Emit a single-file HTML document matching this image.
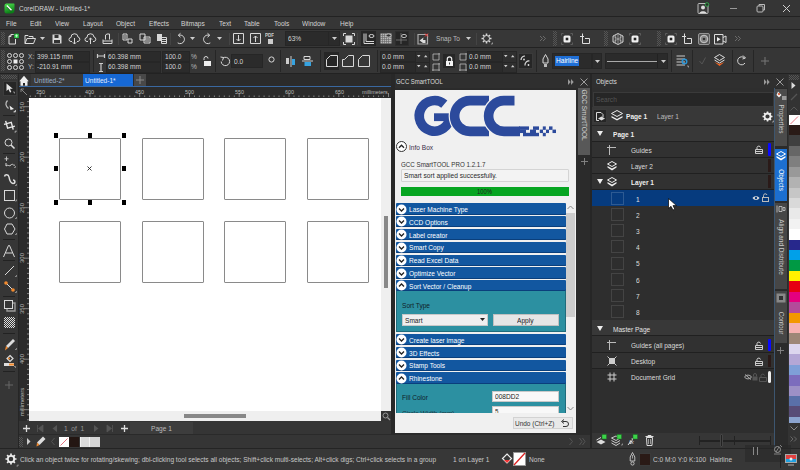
<!DOCTYPE html>
<html><head><meta charset="utf-8">
<style>
*{margin:0;padding:0;box-sizing:border-box}
html,body{width:800px;height:470px;overflow:hidden;background:#333;font-family:"Liberation Sans",sans-serif}
.a{position:absolute}
.t{position:absolute;font-size:7.3px;line-height:8px;color:#d4d4d4;white-space:nowrap;transform:scaleX(0.9);transform-origin:0 50%}
.ln{position:absolute;background:#222}
svg{position:absolute;overflow:visible}
.ic{fill:none;stroke:#d8d8d8;stroke-width:1}
.box{position:absolute;background:#2a2a2a;border:1px solid #454545}
</style></head><body>

<!-- TITLE BAR -->
<div class="a" style="left:0;top:0;width:800px;height:16px;background:#353535"></div>
<svg style="left:3.5px;top:3px" width="11" height="11"><defs><linearGradient id="cg" x1="0" y1="0" x2="0.3" y2="1"><stop offset="0" stop-color="#4fe24f"/><stop offset="1" stop-color="#0b7d17"/></linearGradient></defs><path d="M2.5 0.5H10L10.5 1V7A3.5 3.5 0 0 1 7 10.5H2.5A2 2 0 0 1 0.5 8.5V2.5A2 2 0 0 1 2.5 0.5Z" fill="url(#cg)"/><path d="M3 3.5L7.5 8" stroke="#111" stroke-width="1.6" opacity="0.6"/><path d="M2.8 2.6L7.5 7.2" stroke="#fff" stroke-width="1.4"/></svg>
<div class="t" style="left:19px;top:5px;font-size:7.2px">CorelDRAW - Untitled-1*</div>
<svg style="left:697px;top:2px" width="13" height="12"><rect x="1" y="1.5" width="10" height="10" rx="1" fill="#3a3a3a" stroke="#bbb" stroke-width="1"/><circle cx="6" cy="5.5" r="2" fill="#ddd"/><path d="M2.5 11C3 8.5 9 8.5 9.5 11Z" fill="#ddd"/><circle cx="10" cy="2.5" r="1.8" fill="#2f2f2f" stroke="#2fae4a" stroke-width="0.9"/></svg>
<div class="a" style="left:730px;top:8px;width:7px;height:1px;background:#999"></div>
<svg style="left:756px;top:3px" width="10" height="10"><rect x="1" y="3" width="6" height="6" rx="1" fill="none" stroke="#bbb"/><path d="M3 3V1.5H8.5V7H7" fill="none" stroke="#bbb"/></svg>
<svg style="left:782px;top:4px" width="9" height="9"><path d="M1 1L8 8M8 1L1 8" stroke="#ccc" stroke-width="1"/></svg>
<div class="ln" style="left:0;top:16px;width:800px;height:1px"></div>

<!-- MENU BAR -->
<div class="a" style="left:0;top:17px;width:800px;height:12px;background:#363636"></div>
<div class="t" style="left:6px;top:19.5px">File</div>
<div class="t" style="left:30px;top:19.5px">Edit</div>
<div class="t" style="left:55px;top:19.5px">View</div>
<div class="t" style="left:83px;top:19.5px">Layout</div>
<div class="t" style="left:116px;top:19.5px">Object</div>
<div class="t" style="left:149px;top:19.5px">Effects</div>
<div class="t" style="left:181px;top:19.5px">Bitmaps</div>
<div class="t" style="left:219px;top:19.5px">Text</div>
<div class="t" style="left:244px;top:19.5px">Table</div>
<div class="t" style="left:274px;top:19.5px">Tools</div>
<div class="t" style="left:302px;top:19.5px">Window</div>
<div class="t" style="left:340px;top:19.5px">Help</div>
<div class="ln" style="left:0;top:29px;width:800px;height:1px"></div>

<!-- TOOLBAR -->
<div class="a" style="left:0;top:30px;width:800px;height:17px;background:#373737"></div>
<div class="ln" style="left:0;top:47px;width:800px;height:1px"></div>

<!-- toolbar icons -->
<svg style="left:1px;top:32px" width="4" height="13"><pattern id="grip" width="2" height="2" patternUnits="userSpaceOnUse"><rect width="1" height="1" fill="#555"/><rect x="1" y="1" width="1" height="1" fill="#555"/></pattern><rect width="4" height="13" fill="url(#grip)"/></svg>
<svg style="left:7px;top:33px" width="13" height="12"><path d="M4 1.5H7 M2 3.5L4 1.5V3.5H2V11H8.5V6" fill="none" stroke="#ddd" stroke-width="1"/><rect x="7" y="0.3" width="5" height="5" fill="#2fd14a" stroke="#222" stroke-width="0.5"/><path d="M9.5 1.3V4.3M8 2.8H11" stroke="#fff" stroke-width="0.6"/></svg>
<svg style="left:24px;top:33px" width="12" height="12"><path d="M1 2.5H4L5 3.5H9V5.5 M1 2.5V10.5H9.5L11.5 5.5H3L1 10.5" fill="none" stroke="#ddd" stroke-width="1"/></svg>
<svg style="left:40px;top:37px" width="5" height="3"><path d="M0 0H5L2.5 3Z" fill="#ccc"/></svg>
<svg style="left:52px;top:34px" width="10" height="10"><path d="M0.5 0.5H8L9.5 2V9.5H0.5Z" fill="#d8d8d8"/><rect x="2.5" y="1" width="4" height="3" fill="#333"/><rect x="2" y="6" width="6" height="3" fill="#333"/></svg>
<svg style="left:69px;top:33px" width="11" height="12"><path class="ic" d="M3 8.5 H2 A2 2 0 0 1 2 4.5 A3.5 3.5 0 0 1 9 4 A2.3 2.3 0 0 1 9 8.5 H8 M5.5 5V11 M3.8 9.3L5.5 11L7.2 9.3"/></svg>
<svg style="left:85px;top:33px" width="11" height="12"><path class="ic" d="M3 8.5 H2 A2 2 0 0 1 2 4.5 A3.5 3.5 0 0 1 9 4 A2.3 2.3 0 0 1 9 8.5 H8 M5.5 11V5 M3.8 6.7L5.5 5L7.2 6.7"/></svg>
<svg style="left:102px;top:33px" width="11" height="11"><path class="ic" d="M1 6.5V10.5H10V6.5 M3.5 6.5 V2 L5 1 H7.5 V6.5 M1 8H10"/></svg>
<div class="a" style="left:118px;top:33px;width:1px;height:12px;background:#444"></div>
<svg style="left:122px;top:33px" width="11" height="11"><path class="ic" d="M1 1H5V7H1Z M2 3H4 M2 5H4 M6 6H10V10H6Z"/></svg>
<svg style="left:139px;top:33px" width="12" height="11"><path class="ic" d="M1 1H6V7H1Z M5 4H11V10H5Z M6 6H10 M6 8H10"/></svg>
<svg style="left:156px;top:33px" width="11" height="11"><path d="M1 1H6V8H1Z" fill="#d8d8d8"/><path class="ic" d="M5.5 4.5H10.5V10.5H5.5Z M6 6.5H10 M6 8.5H10"/></svg>
<div class="a" style="left:170px;top:33px;width:1px;height:12px;background:#444"></div>
<svg style="left:175px;top:33px" width="11" height="12"><path class="ic" d="M4 2.2 A4.3 4.3 0 1 1 2.2 9.5" stroke-width="1.1" stroke-dasharray="17 1 1 1 1 1"/><path d="M5.5 0.3L3.2 2.2L5.5 4.2" class="ic" stroke-width="1.1"/></svg>
<svg style="left:190px;top:37px" width="5" height="3"><path d="M0 0H5L2.5 3Z" fill="#ccc"/></svg>
<svg style="left:202px;top:33px" width="11" height="12"><path class="ic" d="M7 2.2 A4.3 4.3 0 1 0 8.8 9.5" stroke-width="1.1" stroke-dasharray="17 1 1 1 1 1"/><path d="M5.5 0.3L7.8 2.2L5.5 4.2" class="ic" stroke-width="1.1"/></svg>
<svg style="left:217px;top:37px" width="5" height="3"><path d="M0 0H5L2.5 3Z" fill="#ccc"/></svg>
<div class="a" style="left:229px;top:33px;width:1px;height:12px;background:#444"></div>
<svg style="left:233px;top:33px" width="11" height="11"><path class="ic" d="M0.5 0.5H10.5V10.5H0.5Z M5.5 2V8 M3.5 6L5.5 8L7.5 6"/></svg>
<svg style="left:250px;top:33px" width="11" height="11"><path class="ic" d="M0.5 0.5H10.5V10.5H0.5Z M5.5 9V3 M3.5 5L5.5 3L7.5 5"/></svg>
<div class="t" style="left:265px;top:33px;font-size:5px;line-height:5px;font-weight:bold;color:#ccc">PDF</div>
<svg style="left:268px;top:39px" width="5" height="5"><rect x="0" y="0" width="5" height="5" fill="#ccc"/></svg>
<div class="box" style="left:285px;top:31px;width:55px;height:15px;background:#2b2b2b;border-color:#262626"></div>
<div class="t" style="left:288px;top:35px">63%</div>
<div class="a" style="left:328px;top:32px;width:1px;height:13px;background:#262626"></div>
<svg style="left:332px;top:37px" width="5" height="3"><path d="M0 0H5L2.5 3Z" fill="#ccc"/></svg>
<svg style="left:343px;top:33px" width="12" height="12"><rect x="2.5" y="2.5" width="7" height="7" fill="#d8d8d8"/><path class="ic" d="M0.5 3V0.5H3 M9 0.5H11.5V3 M11.5 9V11.5H9 M3 11.5H0.5V9"/></svg>
<div class="a" style="left:357px;top:33px;width:1px;height:12px;background:#444"></div>
<div class="a" style="left:361px;top:31px;width:15px;height:15px;background:#262626"></div>
<svg style="left:363px;top:33px" width="12" height="11"><path class="ic" d="M1 0.5V10.5H11 M3 0.5V8.5H11"/><ellipse cx="8.5" cy="3" rx="2.5" ry="1.5" class="ic"/></svg>
<svg style="left:380px;top:33px" width="12" height="11"><rect x="0.5" y="0.5" width="11" height="10" fill="#b8b8b8"/><path d="M2.5 0V11M4.5 0V11M6.5 0V11M8.5 0V11M0 2.5H12M0 4.5H12M0 6.5H12M0 8.5H12" stroke="#666" stroke-width="0.6"/><ellipse cx="8.5" cy="2.5" rx="2.5" ry="1.6" fill="#333" stroke="#ccc" stroke-width="0.8"/></svg>
<div class="a" style="left:395px;top:31px;width:14px;height:15px;background:#262626;border:1px solid #2e2e2e"></div>
<svg style="left:396px;top:33px" width="12" height="12"><path d="M5 0V11M0 7H11" stroke="#888" stroke-width="0.7"/><ellipse cx="8" cy="3" rx="2.5" ry="1.6" fill="#262626" stroke="#ccc" stroke-width="0.9"/></svg>
<div class="a" style="left:414px;top:33px;width:1px;height:12px;background:#444"></div>
<svg style="left:417px;top:33px" width="12" height="12"><path d="M1 1.5H10.5V11H1Z" fill="none" stroke="#aaa" stroke-width="1.2"/><path d="M2.5 7.5L6.5 4.5L6 7H8.5V10H6Z" fill="#ddd"/><path d="M8 0.5L11 3.5M11 0.5L8 3.5" stroke="#e33" stroke-width="1"/></svg>
<div class="t" style="left:436px;top:35px;color:#bbb">Snap To</div>
<svg style="left:466px;top:37px" width="5" height="3"><path d="M0 0H5L2.5 3Z" fill="#ccc"/></svg>
<div class="a" style="left:476px;top:33px;width:1px;height:12px;background:#444"></div>
<svg style="left:481px;top:33px" width="12" height="12"><circle cx="5.5" cy="5.5" r="3" class="ic" stroke-width="1.8"/><path d="M5.5 0.5V2.5M5.5 8.5V10.5M0.5 5.5H2.5M8.5 5.5H10.5M2 2L3.3 3.3M7.7 7.7L9 9M9 2L7.7 3.3M3.3 7.7L2 9" stroke="#d8d8d8" stroke-width="1.6"/><path d="M10 11H11.5V9.5" stroke="#aaa" stroke-width="0.8" fill="none"/></svg>
<svg style="left:540px;top:36px" width="6" height="5"><path d="M0 0L2.5 2.5L0 5M3 0L5.5 2.5L3 5" stroke="#777" fill="none" stroke-width="0.8"/></svg>
<svg style="left:553px;top:31px" width="4" height="15"><rect width="4" height="15" fill="url(#grip)"/></svg>
<svg style="left:561px;top:33px" width="12" height="12"><rect x="2.5" y="2.5" width="7" height="7" rx="1.5" fill="#f0f0f0"/><rect x="4.7" y="4.7" width="2.6" height="2.6" fill="#222"/><path d="M0.5 2.5V0.5H2.5 M9.5 0.5H11.5V2.5 M11.5 9.5V11.5H9.5 M2.5 11.5H0.5V9.5" stroke="#666" stroke-width="0.8" fill="none"/></svg>
<svg style="left:579px;top:33px" width="12" height="12"><path d="M3.5 0.5V4M1 3.5H5 M3.5 4V10.5H10.5V5.5H6" fill="none" stroke="#ddd" stroke-width="1"/></svg>
<svg style="left:604px;top:31px" width="4" height="15"><rect width="4" height="15" fill="url(#grip)"/></svg>
<svg style="left:612px;top:33px" width="12" height="12"><path d="M6 0.5L11 3V9L6 11.5L1 9V3Z" fill="#444" stroke="#ddd" stroke-width="0.9"/><path d="M6 0.5V11.5M1 3L11 9M11 3L1 9M3.5 1.8V10.2M8.5 1.8V10.2" stroke="#bbb" stroke-width="0.6"/></svg>
<svg style="left:629px;top:33px" width="12" height="12"><rect x="2.5" y="2.5" width="7" height="7" rx="1.5" fill="#f0f0f0"/><rect x="4.7" y="4.7" width="2.6" height="2.6" fill="#222"/><path d="M0.5 2.5V0.5H2.5 M9.5 0.5H11.5V2.5 M11.5 9.5V11.5H9.5 M2.5 11.5H0.5V9.5" stroke="#666" stroke-width="0.8" fill="none"/></svg>
<svg style="left:657px;top:31px" width="4" height="15"><rect width="4" height="15" fill="url(#grip)"/></svg>
<svg style="left:665px;top:33px" width="12" height="12"><rect x="2.5" y="2.5" width="7" height="7" rx="1.5" fill="#f0f0f0"/><rect x="4.7" y="4.7" width="2.6" height="2.6" fill="#222"/><path d="M0.5 2.5V0.5H2.5 M9.5 0.5H11.5V2.5 M11.5 9.5V11.5H9.5 M2.5 11.5H0.5V9.5" stroke="#666" stroke-width="0.8" fill="none"/></svg>
<svg style="left:681px;top:33px" width="12" height="12"><path d="M3.5 0.5V4M1 3.5H5 M3.5 4V10.5H10.5V5.5H6" fill="none" stroke="#ddd" stroke-width="1"/></svg>
<svg style="left:698px;top:33px" width="12" height="12"><rect x="0.5" y="0.5" width="11" height="11" fill="#555" stroke="#aaa" stroke-width="0.8" rx="1.5"/><circle cx="6" cy="6" r="3.8" fill="#888" stroke="#ddd" stroke-width="0.8"/><circle cx="6" cy="6" r="1.3" fill="#333"/></svg>
<svg style="left:714px;top:34px" width="13" height="11"><path d="M0.5 0.5H9V10H0.5Z M9 3.5L12 2V8.5L9 7" fill="none" stroke="#ddd" stroke-width="1"/><path d="M3 3L6.5 5.3L3 7.6Z" fill="#eee"/></svg>
<svg style="left:735px;top:36px" width="6" height="5"><path d="M0 0L2.5 2.5L0 5M3 0L5.5 2.5L3 5" stroke="#777" fill="none" stroke-width="0.8"/></svg>


<!-- PROPERTY BAR -->
<div class="a" style="left:0;top:48px;width:800px;height:25px;background:#363636"></div>
<svg style="left:1px;top:50px" width="4" height="21"><rect width="4" height="21" fill="url(#grip)"/></svg>
<svg style="left:7px;top:53px" width="17" height="17"><g class="ic" stroke="#ccc"><circle cx="2.5" cy="2.5" r="2"/><circle cx="8.5" cy="2.5" r="2"/><circle cx="14.5" cy="2.5" r="2"/><circle cx="2.5" cy="8.5" r="2"/><circle cx="14.5" cy="8.5" r="2"/><circle cx="2.5" cy="14.5" r="2"/><circle cx="8.5" cy="14.5" r="2"/><circle cx="14.5" cy="14.5" r="2"/></g><rect x="6.5" y="6.5" width="4" height="4" fill="#eee"/></svg>
<div class="t" style="left:28px;top:53px;color:#bbb">X:</div>
<div class="t" style="left:28px;top:63px;color:#bbb">Y:</div>
<div class="box" style="left:35px;top:51px;width:55px;height:11px;border-color:#262626;background:#2b2b2b"></div>
<div class="box" style="left:35px;top:62px;width:55px;height:11px;border-color:#262626;background:#2b2b2b"></div>
<div class="t" style="left:37px;top:53px">399.115 mm</div>
<div class="t" style="left:37px;top:63px">-210.91 mm</div>
<div class="a" style="left:93px;top:50px;width:1px;height:22px;background:#262626"></div>
<svg style="left:97px;top:54px" width="8" height="4"><path d="M0.5 0V4M7.5 0V4M0.5 2H7.5" stroke="#ccc" stroke-width="1.2"/></svg>
<svg style="left:99px;top:63px" width="4" height="9"><path d="M0 0.5H4M0 8.5H4M2 0.5V8.5" stroke="#ccc" stroke-width="1.2"/></svg>
<div class="box" style="left:106px;top:51px;width:55px;height:11px;border-color:#262626;background:#2b2b2b"></div>
<div class="box" style="left:106px;top:62px;width:55px;height:11px;border-color:#262626;background:#2b2b2b"></div>
<div class="t" style="left:108px;top:53px">60.398 mm</div>
<div class="t" style="left:108px;top:63px">60.398 mm</div>
<div class="box" style="left:162px;top:51px;width:28px;height:11px;border-color:#262626;background:#2b2b2b"></div>
<div class="box" style="left:162px;top:62px;width:28px;height:11px;border-color:#262626;background:#2b2b2b"></div>
<div class="t" style="left:165px;top:53px">100.0</div>
<div class="t" style="left:165px;top:63px">100.0</div>
<div class="t" style="left:191px;top:53px;color:#bbb">%</div>
<div class="t" style="left:191px;top:63px;color:#bbb">%</div>
<svg style="left:202px;top:56px" width="9" height="10"><path d="M2 4V2.5A2 2 0 0 1 6 2.5" class="ic" stroke-width="1.2"/><rect x="2" y="5" width="7" height="5" fill="#eee"/></svg>
<div class="a" style="left:215px;top:50px;width:1px;height:22px;background:#262626"></div>
<svg style="left:220px;top:56px" width="11" height="11"><path d="M3 2A4.2 4.2 0 1 1 1.2 5.5" class="ic" stroke-width="1.2"/><path d="M0.5 1L3.5 1.5L2.5 4.5" class="ic"/></svg>
<div class="box" style="left:231px;top:54px;width:32px;height:14px;border-color:#262626;background:#2b2b2b"></div>
<div class="t" style="left:234px;top:58px">0.0</div>
<svg style="left:268px;top:56px" width="7" height="7"><circle cx="3.5" cy="3.5" r="2.6" class="ic" stroke-width="1.1"/></svg>
<div class="a" style="left:280px;top:50px;width:1px;height:22px;background:#262626"></div>
<svg style="left:285px;top:55px" width="11" height="13"><path d="M1 3V9H4V3Z" fill="#ccc"/><path d="M6 1V12" stroke="#ccc"/><path d="M7 4H10V10H7Z" fill="#36a3e0"/></svg>
<svg style="left:302px;top:55px" width="11" height="13"><path d="M2 1.5H8V4.5H2Z" class="ic"/><path d="M0 6H11" stroke="#ccc"/><path d="M2.5 7H9V11H2.5Z" fill="#36a3e0"/></svg>
<div class="a" style="left:320px;top:50px;width:1px;height:22px;background:#262626"></div>
<div class="a" style="left:324px;top:52px;width:15px;height:18px;background:#262626"></div>
<svg style="left:326px;top:55px" width="12" height="12"><path class="ic" d="M0.5 11.5V4.5L4.5 0.5H11.5V11.5Z" stroke-width="1.1"/></svg>
<svg style="left:342px;top:55px" width="12" height="12"><path class="ic" d="M0.5 11.5V4.5H2.5L6.5 0.5H11.5V11.5Z" stroke-width="1.1"/></svg>
<svg style="left:358px;top:55px" width="12" height="12"><path class="ic" d="M0.5 11.5V4.5L4.5 0.5H11.5V11.5Z" stroke-width="1.1"/></svg>
<div class="a" style="left:377px;top:50px;width:1px;height:22px;background:#262626"></div>
<div class="box" style="left:380px;top:51px;width:36px;height:11px;border-color:#262626;background:#2b2b2b"></div>
<div class="box" style="left:380px;top:62px;width:36px;height:11px;border-color:#262626;background:#2b2b2b"></div>
<div class="t" style="left:382px;top:53px">0.0 mm</div>
<div class="t" style="left:382px;top:63px">0.0 mm</div>
<div class="a" style="left:415px;top:51px;width:15px;height:22px;background:#2f2f2f;border:1px solid #262626"></div><div class="a" style="left:415px;top:61.5px;width:15px;height:1px;background:#262626"></div>
<svg style="left:417px;top:55px" width="11" height="14"><path d="M0 0H3.5L1.75 2.2Z M7 2.2H10.5L8.75 0Z M0 10H3.5L1.75 12.2Z M7 12.2H10.5L8.75 10Z" fill="#ccc"/></svg>
<svg style="left:431px;top:52px" width="10" height="21"><path d="M2 2H8V8H2Z M2 12H8V18H2Z" fill="none" stroke="#bbb" stroke-width="0.8"/><g fill="#888"><rect x="7" y="1" width="2" height="2"/><rect x="1" y="17" width="2" height="2"/><rect x="7" y="11" width="2" height="2"/><rect x="7" y="17" width="2" height="2"/></g></svg>
<div class="a" style="left:443px;top:54px;width:12px;height:14px;background:#262626"></div>
<svg style="left:445px;top:56px" width="9" height="11"><path d="M2.3 5V3A2.2 2.2 0 0 1 6.7 3V5" fill="none" stroke="#eee" stroke-width="1.2"/><rect x="1" y="5" width="7" height="5" fill="#f4f4f4"/><rect x="4" y="6.5" width="1" height="2" fill="#333"/></svg>
<svg style="left:458px;top:52px" width="10" height="21"><path d="M2 2H8V8H2Z M2 12H8V18H2Z" fill="none" stroke="#bbb" stroke-width="0.8"/><g fill="#888"><rect x="7" y="1" width="2" height="2"/><rect x="1" y="17" width="2" height="2"/><rect x="7" y="17" width="2" height="2"/></g></svg>
<div class="box" style="left:467px;top:51px;width:36px;height:11px;border-color:#262626;background:#2b2b2b"></div>
<div class="box" style="left:467px;top:62px;width:36px;height:11px;border-color:#262626;background:#2b2b2b"></div>
<div class="t" style="left:469px;top:53px">0.0 mm</div>
<div class="t" style="left:469px;top:63px">0.0 mm</div>
<div class="a" style="left:502px;top:51px;width:15px;height:22px;background:#2f2f2f;border:1px solid #262626"></div><div class="a" style="left:502px;top:61.5px;width:15px;height:1px;background:#262626"></div>
<svg style="left:504px;top:55px" width="11" height="14"><path d="M0 0H3.5L1.75 2.2Z M7 2.2H10.5L8.75 0Z M0 10H3.5L1.75 12.2Z M7 12.2H10.5L8.75 10Z" fill="#ccc"/></svg>
<div class="a" style="left:518px;top:53px;width:15px;height:16px;background:#262626;border:1px solid #3a3a3a"></div>
<svg style="left:520px;top:55px" width="11" height="12"><path d="M1 5A4 4 0 0 1 5 1M5 10.5A4 4 0 0 1 9.5 6" fill="none" stroke="#ddd" stroke-width="1.2"/><circle cx="4" cy="4.5" r="0.9" fill="#ddd"/><circle cx="8.5" cy="10" r="0.9" fill="#ddd"/></svg>
<div class="a" style="left:536px;top:50px;width:1px;height:22px;background:#262626"></div>
<svg style="left:542px;top:54px" width="7" height="14"><path d="M3.5 0.5L6 5V9H1V5Z" class="ic" stroke="#bbb"/><path d="M2 10H5V13H2Z" fill="#bbb"/></svg>
<div class="box" style="left:552px;top:53px;width:40px;height:16px;border-color:#262626;background:#2b2b2b"></div>
<div class="a" style="left:555px;top:56px;width:24px;height:10px;background:#1f6fd6"></div>
<div class="t" style="left:556px;top:57px;color:#fff">Hairline</div>
<div class="box" style="left:592px;top:53px;width:10px;height:16px;border-color:#262626;background:#2b2b2b"></div>
<svg style="left:595px;top:60px" width="5" height="3"><path d="M0 0H5L2.5 3Z" fill="#ccc"/></svg>
<div class="box" style="left:605px;top:53px;width:63px;height:16px;border-color:#262626;background:#2b2b2b"></div>
<div class="a" style="left:607px;top:61px;width:50px;height:1px;background:#aaa"></div>
<div class="a" style="left:657px;top:54px;width:1px;height:14px;background:#222"></div>
<svg style="left:661px;top:60px" width="5" height="3"><path d="M0 0H5L2.5 3Z" fill="#ccc"/></svg>
<div class="a" style="left:671px;top:50px;width:1px;height:22px;background:#262626"></div>
<svg style="left:676px;top:55px" width="13" height="13"><path d="M0.5 1H9M0.5 4H9M0.5 7H9M0.5 10H9" stroke="#999" stroke-width="1.6"/><circle cx="8.5" cy="6.5" r="2.3" fill="none" stroke="#2b95d6" stroke-width="1.4"/><path d="M11 11H12.5V12.5" stroke="#aaa" fill="none" stroke-width="0.8"/></svg>
<div class="a" style="left:692px;top:50px;width:1px;height:22px;background:#262626"></div>
<svg style="left:699px;top:57px" width="7" height="8"><path d="M0.5 4L3 7L6.5 0.5" stroke="#555" fill="none"/></svg>
<svg style="left:714px;top:54px" width="11" height="13"><path d="M5.5 0.5L10.5 3.5L5.5 6.5L0.5 3.5Z" fill="none" stroke="#ddd"/><path d="M0.5 6L5.5 9L10.5 6" stroke="#ddd" fill="none"/><path d="M0.5 8L5.5 12L10.5 8L5.5 10Z" fill="#f26522"/></svg>
<div class="a" style="left:732px;top:50px;width:1px;height:22px;background:#262626"></div>
<svg style="left:736px;top:55px" width="11" height="12"><path d="M8.5 3A4 4 0 1 0 9 8" class="ic" stroke-width="1.5"/><path d="M7 0.5L9.5 3L6.5 4" class="ic"/></svg>
<div class="a" style="left:753px;top:50px;width:1px;height:22px;background:#262626"></div>
<svg style="left:761px;top:57px" width="8" height="8"><path d="M4 0V8M0 4H8" stroke="#777" stroke-width="1"/></svg>
<div class="ln" style="left:0;top:73px;width:800px;height:1px"></div>


<!-- LEFT TOOLBOX -->
<div class="a" style="left:0;top:74px;width:18px;height:374px;background:#363636"></div>
<div class="a" style="left:18px;top:74px;width:1px;height:374px;background:#262626"></div>
<svg style="left:1px;top:75px" width="16" height="4"><rect width="16" height="4" fill="url(#grip)"/></svg>
<div class="a" style="left:3px;top:81px;width:14px;height:15px;background:#262626;border:1px solid #3c3c3c"></div>
<svg style="left:5px;top:83px" width="10" height="11"><path d="M1.5 0.5V8L3.5 6.3L5 9.5L6.3 9L5 5.8H7.8Z" fill="#e6e6e6"/><path d="M8 9H9.5V10.5" stroke="#aaa" fill="none" stroke-width="0.7"/></svg>
<svg style="left:4px;top:100px" width="12" height="13"><path d="M3.5 0.5C1 3 1.5 6 4.5 8.5" fill="none" stroke="#bbb" stroke-width="1.3"/><path d="M5.5 5.5L10 9L6.5 10Z" fill="#eee"/><path d="M9.5 12H11.5V10" stroke="#ccc" fill="#ccc" stroke-width="0.8"/></svg>
<div class="a" style="left:3px;top:115px;width:12px;height:1px;background:#222"></div>
<svg style="left:3px;top:119px" width="14" height="14"><g transform="rotate(-15 6.5 6.5)"><path d="M4 1V8.5H11.5 M1.5 4H9V11.5" fill="none" stroke="#e8e8e8" stroke-width="1.4"/></g><path d="M11.5 13H13V11.5" stroke="#ccc" fill="none" stroke-width="0.8"/></svg>
<svg style="left:4px;top:138px" width="12" height="12"><circle cx="4.5" cy="4.5" r="3.5" class="ic" stroke-width="1.2"/><path d="M7 7L10.5 10.5" stroke="#ddd" stroke-width="1.6"/></svg>
<div class="a" style="left:3px;top:153px;width:12px;height:1px;background:#222"></div>
<svg style="left:4px;top:156px" width="12" height="13"><path d="M2.5 0.5V5M0.5 2.8H4.5" stroke="#ccc" stroke-width="0.9"/><path d="M2 7V10C4 8 5 11 7 9S9 10 11 9" class="ic"/><path d="M10 11.5H11.5V10" stroke="#aaa" fill="none" stroke-width="0.7"/></svg>
<svg style="left:3px;top:173px" width="14" height="14"><path d="M1.5 3.5C2 1 5.5 1 6 4C6.5 7 7 10 10 10.5C12.5 10.5 12.5 7 10 7" fill="none" stroke="#ddd" stroke-width="1.5"/><path d="M12 12.5H13.5V11" stroke="#aaa" fill="none" stroke-width="0.7"/></svg>
<svg style="left:4px;top:190px" width="13" height="13"><rect x="0.5" y="0.5" width="10" height="10" class="ic" stroke-width="1.2"/><path d="M11 11H12.5V9.5" stroke="#aaa" fill="none" stroke-width="0.7"/></svg>
<svg style="left:4px;top:207px" width="13" height="13"><circle cx="5.5" cy="6" r="5" class="ic" stroke-width="1.2"/><path d="M11 11.5H12.5V10" stroke="#aaa" fill="none" stroke-width="0.7"/></svg>
<svg style="left:4px;top:223px" width="13" height="13"><path d="M3 1H8L11 6L8 11H3L0.5 6Z" class="ic" stroke-width="1.2"/><path d="M11 11.5H12.5V10" stroke="#aaa" fill="none" stroke-width="0.7"/></svg>
<div class="a" style="left:3px;top:239px;width:12px;height:1px;background:#222"></div>
<svg style="left:3px;top:245px" width="13" height="13"><path d="M0.5 12L5.5 0.5H6.5L11.5 12M2.5 8H9.5" class="ic" stroke-width="1.2"/></svg>
<div class="a" style="left:3px;top:260px;width:12px;height:1px;background:#222"></div>
<svg style="left:4px;top:265px" width="13" height="13"><path d="M1 10L10 1" class="ic" stroke-width="1.2"/><path d="M11 11.5H12.5V10" stroke="#aaa" fill="none" stroke-width="0.7"/></svg>
<svg style="left:4px;top:281px" width="13" height="13"><path d="M2 2L9 9" stroke="#ddd"/><circle cx="2" cy="2" r="1.8" fill="#f28a2e"/><circle cx="9" cy="9" r="1.8" fill="#f28a2e"/><path d="M11 11.5H12.5V10" stroke="#aaa" fill="none" stroke-width="0.7"/></svg>
<div class="a" style="left:3px;top:296px;width:12px;height:1px;background:#222"></div>
<svg style="left:4px;top:300px" width="13" height="13"><rect x="0.5" y="0.5" width="8" height="8" class="ic" stroke-width="1.2"/><path d="M9 3H11V11H3V9" fill="none" stroke="#999" stroke-width="1.4"/></svg>
<svg style="left:4px;top:317px" width="12" height="12"><pattern id="chk" width="2" height="2" patternUnits="userSpaceOnUse"><rect width="2" height="2" fill="#ddd"/><rect width="1" height="1" fill="#333"/><rect x="1" y="1" width="1" height="1" fill="#333"/></pattern><rect width="11" height="11" fill="url(#chk)"/></svg>
<div class="a" style="left:3px;top:333px;width:12px;height:1px;background:#222"></div>
<svg style="left:4px;top:338px" width="13" height="14"><path d="M9 1L11 3L4 10L2 8Z" fill="#ddd"/><path d="M2 8L4 10L1 12.5Z" fill="#f28a2e"/><path d="M11 11.5H12.5V10" stroke="#aaa" fill="none" stroke-width="0.7"/></svg>
<svg style="left:3px;top:355px" width="13" height="14"><path d="M7 0.5L10 3.5L7 6.5L4 3.5Z" fill="none" stroke="#ddd" stroke-width="1.2"/><circle cx="6" cy="3.5" r="1" fill="#f28a2e"/><rect x="1" y="8" width="10" height="3" fill="#ddd"/><rect x="6" y="8.5" width="5" height="2" fill="#f28a2e"/><path d="M11 11.5H12.5V13" stroke="#aaa" fill="none" stroke-width="0.7"/></svg>
<div class="a" style="left:3px;top:371px;width:12px;height:1px;background:#222"></div>
<svg style="left:5px;top:381px" width="8" height="8"><path d="M4 0V8M0 4H8" stroke="#666"/></svg>

<!-- DOC TABS -->
<div class="a" style="left:19px;top:74px;width:372px;height:13px;background:#2b2b2b"></div>
<div class="a" style="left:19px;top:74px;width:12px;height:13px;background:#333"></div>
<svg style="left:19px;top:75px" width="11" height="11"><path d="M5 0.8L0.3 6.3H1.5V10.7H8.5V6.3H9.7Z" fill="#eee"/><rect x="4" y="8" width="2" height="2.7" fill="#222"/></svg>
<div class="a" style="left:31px;top:74px;width:52px;height:13px;background:#3a3a3a"></div>
<div class="t" style="left:34px;top:77px;color:#9ab0c8">Untitled-2*</div>
<div class="a" style="left:83px;top:74px;width:50px;height:13px;background:#1668d4"></div>
<div class="t" style="left:85px;top:77px;color:#e0ecff">Untitled-1*</div>
<div class="a" style="left:134px;top:74px;width:12px;height:13px;background:#484848"></div>
<svg style="left:136px;top:76px" width="8" height="8"><path d="M4 0V8M0 4H8" stroke="#888"/></svg>
<div class="a" style="left:19px;top:86px;width:372px;height:1.6px;background:#3a68a0"></div>

<!-- RULERS -->
<div class="a" style="left:19px;top:87px;width:372px;height:11px;background:#2b2b2b"></div>
<div class="a" style="left:19px;top:97px;width:10px;height:324px;background:#2b2b2b"></div>
<svg style="left:20px;top:88px" width="8" height="8"><path d="M1 1L7 7M1 1V4M1 1H4" stroke="#999" stroke-width="0.8" fill="none"/></svg>
<svg style="left:29px;top:87px" width="362" height="11"><path d="M1.3 8.5V10M6.3 8.5V10M11.2 6V10M16.2 8.5V10M21.2 8.5V10M26.2 8.5V10M31.2 8.5V10M36.1 8.5V10M41.1 8.5V10M46.1 8.5V10M51.0 8.5V10M56.0 8.5V10M61.0 6V10M66.0 8.5V10M70.9 8.5V10M75.9 8.5V10M80.9 8.5V10M85.9 8.5V10M90.8 8.5V10M95.8 8.5V10M100.8 8.5V10M105.8 8.5V10M110.7 6V10M115.7 8.5V10M120.7 8.5V10M125.7 8.5V10M130.6 8.5V10M135.6 8.5V10M140.6 8.5V10M145.6 8.5V10M150.5 8.5V10M155.5 8.5V10M160.5 6V10M165.5 8.5V10M170.4 8.5V10M175.4 8.5V10M180.4 8.5V10M185.4 8.5V10M190.3 8.5V10M195.3 8.5V10M200.3 8.5V10M205.3 8.5V10M210.2 6V10M215.2 8.5V10M220.2 8.5V10M225.2 8.5V10M230.1 8.5V10M235.1 8.5V10M240.1 8.5V10M245.1 8.5V10M250.0 8.5V10M255.0 8.5V10M260.0 6V10M265.0 8.5V10M269.9 8.5V10M274.9 8.5V10M279.9 8.5V10M284.9 8.5V10M289.9 8.5V10M294.8 8.5V10M299.8 8.5V10M304.8 8.5V10M309.8 6V10M314.7 8.5V10M319.7 8.5V10M324.7 8.5V10M329.7 8.5V10M334.6 8.5V10M339.6 8.5V10M344.6 8.5V10M349.6 8.5V10M354.5 8.5V10M359.5 6V10" stroke="#999" stroke-width="0.8"/></svg>
<svg style="left:19px;top:98px" width="10" height="323"><path d="M8 3.6H10M5 8.7H10M8 13.7H10M8 18.8H10M8 23.8H10M8 28.9H10M8 33.9H10M8 39.0H10M8 44.0H10M8 49.1H10M8 54.2H10M5 59.2H10M8 64.3H10M8 69.3H10M8 74.4H10M8 79.4H10M8 84.5H10M8 89.5H10M8 94.6H10M8 99.6H10M8 104.7H10M5 109.7H10M8 114.8H10M8 119.8H10M8 124.9H10M8 129.9H10M8 135.0H10M8 140.0H10M8 145.1H10M8 150.1H10M8 155.2H10M5 160.2H10M8 165.3H10M8 170.3H10M8 175.4H10M8 180.4H10M8 185.5H10M8 190.5H10M8 195.6H10M8 200.6H10M8 205.7H10M5 210.7H10M8 215.8H10M8 220.8H10M8 225.9H10M8 230.9H10M8 236.0H10M8 241.0H10M8 246.1H10M8 251.1H10M8 256.2H10M5 261.2H10M8 266.3H10M8 271.3H10M8 276.4H10M8 281.4H10M8 286.5H10M8 291.5H10M8 296.6H10M8 301.6H10M8 306.7H10M5 311.7H10M8 316.8H10M8 321.8H10" stroke="#999" stroke-width="0.8"/></svg>
<div class="t" style="left:35.5px;top:87.5px;font-size:6px;color:#b8b8b8">350</div>
<div class="t" style="left:85.3px;top:87.5px;font-size:6px;color:#b8b8b8">400</div>
<div class="t" style="left:135.0px;top:87.5px;font-size:6px;color:#b8b8b8">450</div>
<div class="t" style="left:185.0px;top:87.5px;font-size:6px;color:#b8b8b8">500</div>
<div class="t" style="left:235.0px;top:87.5px;font-size:6px;color:#b8b8b8">550</div>
<div class="t" style="left:285.0px;top:87.5px;font-size:6px;color:#b8b8b8">600</div>
<div class="t" style="left:335.0px;top:87.5px;font-size:6px;color:#b8b8b8">650</div>
<div class="t" style="left:362px;top:87.5px;font-size:6px;color:#b8b8b8">millimeters</div>

<div class="t" style="left:17px;top:102.7px;width:10px;font-size:6px;color:#b8b8b8;transform:rotate(-90deg);transform-origin:50% 50%;text-align:center">150</div>
<div class="t" style="left:17px;top:153.2px;width:10px;font-size:6px;color:#b8b8b8;transform:rotate(-90deg);transform-origin:50% 50%;text-align:center">200</div>
<div class="t" style="left:17px;top:203.7px;width:10px;font-size:6px;color:#b8b8b8;transform:rotate(-90deg);transform-origin:50% 50%;text-align:center">250</div>
<div class="t" style="left:17px;top:254.2px;width:10px;font-size:6px;color:#b8b8b8;transform:rotate(-90deg);transform-origin:50% 50%;text-align:center">300</div>
<div class="t" style="left:17px;top:304.7px;width:10px;font-size:6px;color:#b8b8b8;transform:rotate(-90deg);transform-origin:50% 50%;text-align:center">350</div>
<div class="t" style="left:17px;top:355.2px;width:10px;font-size:6px;color:#b8b8b8;transform:rotate(-90deg);transform-origin:50% 50%;text-align:center">400</div>
<div class="t" style="left:2px;top:398px;width:40px;font-size:6px;color:#b8b8b8;transform:rotate(-90deg);transform-origin:50% 50%;text-align:center">millimeters</div>
<!-- CANVAS -->
<div class="a" style="left:29px;top:98px;width:362px;height:323px;background:#fff"></div>
<div class="a" style="left:381px;top:98px;width:10px;height:313px;background:#efefef"></div>
<div class="a" style="left:384px;top:216px;width:4px;height:72px;background:#888"></div>
<div class="a" style="left:29px;top:411px;width:352px;height:10px;background:#efefef"></div>
<div class="a" style="left:184px;top:414px;width:62px;height:4px;background:#888"></div>
<div class="a" style="left:381px;top:411px;width:10px;height:10px;background:#333"></div>
<svg style="left:382px;top:412px" width="9" height="9"><circle cx="3.5" cy="3.5" r="2.5" fill="none" stroke="#999"/><path d="M5.5 5.5L8 8" stroke="#999" stroke-width="1.2"/></svg>
<div class="a" style="left:391px;top:74px;width:4px;height:361px;background:#282828"></div>
<div class="a" style="left:59px;top:138px;width:61.5px;height:61.5px;border:1px solid #8a8a8a;border-radius:1px"></div>
<div class="a" style="left:59px;top:221px;width:61.5px;height:61.5px;border:1px solid #8a8a8a;border-radius:1px"></div>
<div class="a" style="left:142px;top:138px;width:61.5px;height:61.5px;border:1px solid #8a8a8a;border-radius:1px"></div>
<div class="a" style="left:142px;top:221px;width:61.5px;height:61.5px;border:1px solid #8a8a8a;border-radius:1px"></div>
<div class="a" style="left:224px;top:138px;width:61.5px;height:61.5px;border:1px solid #8a8a8a;border-radius:1px"></div>
<div class="a" style="left:224px;top:221px;width:61.5px;height:61.5px;border:1px solid #8a8a8a;border-radius:1px"></div>
<div class="a" style="left:307px;top:138px;width:61.5px;height:61.5px;border:1px solid #8a8a8a;border-radius:1px"></div>
<div class="a" style="left:307px;top:221px;width:61.5px;height:61.5px;border:1px solid #8a8a8a;border-radius:1px"></div>
<div class="a" style="left:53.5px;top:132.8px;width:4.8px;height:4.8px;background:#000"></div>
<div class="a" style="left:53.5px;top:166.3px;width:4.8px;height:4.8px;background:#000"></div>
<div class="a" style="left:53.5px;top:200.3px;width:4.8px;height:4.8px;background:#000"></div>
<div class="a" style="left:87.5px;top:132.8px;width:4.8px;height:4.8px;background:#000"></div>
<div class="a" style="left:87.5px;top:200.3px;width:4.8px;height:4.8px;background:#000"></div>
<div class="a" style="left:121.5px;top:132.8px;width:4.8px;height:4.8px;background:#000"></div>
<div class="a" style="left:121.5px;top:166.3px;width:4.8px;height:4.8px;background:#000"></div>
<div class="a" style="left:121.5px;top:200.3px;width:4.8px;height:4.8px;background:#000"></div>
<svg style="left:87px;top:166px" width="5" height="5"><path d="M0.5 0.5L4.5 4.5M4.5 0.5L0.5 4.5" stroke="#222" stroke-width="0.9"/></svg>

<!-- PAGE NAV -->
<div class="a" style="left:19px;top:421px;width:372px;height:14px;background:#353535"></div>
<svg style="left:23px;top:425px" width="7" height="7"><path d="M3.5 0V7M0 3.5H7" stroke="#ddd" stroke-width="1.3"/></svg>
<svg style="left:37px;top:425px" width="6" height="7"><path d="M0.5 0V7M6 0L1.5 3.5L6 7Z" stroke="#555" fill="#555" stroke-width="0.8"/></svg>
<svg style="left:52px;top:425px" width="5" height="7"><path d="M5 0L0.5 3.5L5 7Z" fill="#555"/></svg>
<div class="t" style="left:64px;top:425px;color:#999">1&nbsp; of&nbsp; 1</div>
<svg style="left:94px;top:425px" width="5" height="7"><path d="M0 0L4.5 3.5L0 7Z" fill="#555"/></svg>
<svg style="left:107px;top:425px" width="6" height="7"><path d="M5.5 0V7M0 0L4.5 3.5L0 7Z" stroke="#555" fill="#555" stroke-width="0.8"/></svg>
<svg style="left:121px;top:425px" width="7" height="7"><path d="M3.5 0V7M0 3.5H7" stroke="#ddd" stroke-width="1.3"/></svg>
<div class="a" style="left:130px;top:422px;width:63px;height:12px;background:#3d3d3d"></div>
<div class="t" style="left:151px;top:425px;color:#bbb">Page 1</div>
<div class="ln" style="left:19px;top:434px;width:372px;height:1px;background:#2a2a2a"></div>
<!-- COLOR ROW -->
<div class="a" style="left:19px;top:435px;width:572px;height:13px;background:#353535"></div>
<svg style="left:19px;top:437px" width="4" height="10"><rect width="4" height="10" fill="url(#grip)"/></svg>
<svg style="left:27px;top:438px" width="4" height="7"><path d="M0 0L3.5 3.5L0 7Z" fill="#ccc"/></svg>
<svg style="left:36px;top:436px" width="10" height="11"><path d="M7 0.5L9.5 3L3.5 9L1 6.5Z" fill="#ddd"/><path d="M1 6.5L3.5 9L0.5 10.5Z" fill="#f28a2e"/></svg>
<svg style="left:51px;top:438px" width="4" height="7"><path d="M3.5 0L0.5 3.5L3.5 7" stroke="#555" fill="none"/></svg>
<div class="a" style="left:58.5px;top:437px;width:10.5px;height:10px;background:#fff"></div>
<svg style="left:58.5px;top:437px" width="10.5" height="10"><path d="M1.5 8.5L8.5 1.5" stroke="#e05060" stroke-width="0.8"/></svg>
<div class="a" style="left:69.3px;top:437px;width:9.5px;height:10px;background:#231612"></div>
<div class="a" style="left:79.5px;top:437px;width:10px;height:10px;background:#dcdcdc;border-left:1px solid #f2f2f2;border-right:1px solid #f2f2f2"></div>
<div class="a" style="left:90px;top:437px;width:10px;height:10px;background:#d4d4d4"></div>
<svg style="left:569px;top:438px" width="4" height="7"><path d="M0.5 0L3.5 3.5L0.5 7" stroke="#555" fill="none"/></svg>
<svg style="left:579px;top:438px" width="7" height="7"><path d="M0.5 0L3 3.5L0.5 7M3.5 0L6 3.5L3.5 7" stroke="#555" fill="none"/></svg>
<div class="ln" style="left:0;top:448px;width:800px;height:1px;background:#242424"></div>


<!-- GCC PANEL -->
<div class="a" style="left:395px;top:74px;width:196px;height:14px;background:#2f2f2f"></div>
<div class="t" style="left:396px;top:78px;font-size:6.6px;color:#ddd">GCC SmartTOOL</div>
<svg style="left:568px;top:79px" width="6" height="6"><path d="M0 0L2.7 3L0 6ZM3 0L5.7 3L3 6Z" fill="#999"/></svg>
<svg style="left:580px;top:78px" width="8" height="8"><path d="M0.5 0.5L7.5 7.5M7.5 0.5L0.5 7.5" stroke="#aaa" stroke-width="0.9"/></svg>
<div class="a" style="left:395px;top:88px;width:196px;height:347px;background:#2b2b2b"></div>
<div class="a" style="left:395px;top:90px;width:181px;height:343px;background:#f0f0f0"></div>
<div class="a" style="left:578px;top:88px;width:12px;height:67px;background:#585858"></div>
<div class="t" style="left:550px;top:111px;width:68px;font-size:6.5px;color:#cfcfcf;transform:rotate(90deg);transform-origin:50% 50%;text-align:center">GCC SmartTOOL</div>
<svg style="left:581px;top:158px" width="7" height="7"><path d="M3.5 0V7M0 3.5H7" stroke="#888" stroke-width="0.9"/></svg>
<!-- GCC LOGO -->
<svg style="left:395px;top:90px" width="181" height="50" viewBox="395 90 181 50">
 <g fill="none" stroke-linecap="butt">
  <path d="M444.3 104.1 A15.3 15.3 0 1 0 449.8 117" stroke="#f0f0f0" stroke-width="12"/>
  <path d="M444.3 104.1 A15.3 15.3 0 1 0 449.8 117" stroke="#2c4a9c" stroke-width="9.6"/>
  <rect x="434" y="113.3" width="20.5" height="7.8" fill="#2c4a9c" stroke="none"/>
  <path d="M489 100.6 H470 A15.4 15.4 0 0 0 470 131.4 H489" stroke="#f0f0f0" stroke-width="12"/>
  <path d="M489 100.6 H470 A15.4 15.4 0 0 0 470 131.4 H489" stroke="#2c4a9c" stroke-width="9.6"/>
  <path d="M514.5 100.6 H504 A15.4 15.4 0 0 0 504 131.4 H520" stroke="#f0f0f0" stroke-width="12"/>
  <path d="M514.5 100.6 H504 A15.4 15.4 0 0 0 504 131.4 H520" stroke="#2c4a9c" stroke-width="9.6"/>
 </g>
 <g fill="#2c4a9c"><rect x="519" y="126.4" width="10.0" height="3.45"/><rect x="533" y="126.4" width="6.0" height="3.45"/><rect x="542.8" y="126.4" width="3.0" height="3.45"/><rect x="549" y="126.4" width="3.5" height="3.45"/><rect x="519" y="129.6" width="7.0" height="3.45"/><rect x="530" y="129.6" width="6.0" height="3.45"/><rect x="539.8" y="129.6" width="3.2" height="3.45"/><rect x="546" y="129.6" width="3.0" height="3.45"/><rect x="552.5" y="129.6" width="3.5" height="3.45"/><rect x="523" y="132.8" width="16.0" height="3.45"/><rect x="542.8" y="132.8" width="3.0" height="3.45"/></g>
</svg>
<svg style="left:396px;top:141px" width="12" height="12"><circle cx="5.5" cy="5.5" r="5" fill="#fff" stroke="#333" stroke-width="1"/><path d="M3 6.7L5.5 4.2L8 6.7" stroke="#222" stroke-width="1.3" fill="none"/></svg>
<div class="t" style="left:409px;top:143.5px;color:#3a2f4a">Info Box</div>
<div class="t" style="left:401px;top:161px;color:#333;transform:scaleX(0.85)">GCC SmartTOOL PRO 1.2.1.7</div>
<div class="a" style="left:401px;top:169px;width:168px;height:13px;background:#f3f3f3;border:1px solid #d4d4d4;border-radius:1px"></div>
<div class="t" style="left:404px;top:172px;color:#2a2a2a;transform:scaleX(0.91)">Smart sort applied successfully.</div>
<div class="a" style="left:401px;top:187px;width:168px;height:9px;background:#06a521"></div>
<div class="t" style="left:477px;top:187.5px;font-size:6.5px;color:#222">100%</div>
<div class="a" style="left:395.5px;top:203.3px;width:170px;height:11.3px;background:#1257a0;border-radius:1px;box-shadow:inset 0 -1px 0 #0a3f7c"></div>
<svg style="left:396px;top:203.5px" width="11" height="11"><circle cx="5.5" cy="5.5" r="5" fill="#fff"/><path d="M3 4.5L5.5 7L8 4.5" stroke="#222" stroke-width="1.3" fill="none"/></svg>
<div class="t" style="left:409px;top:206.0px;color:#fff">Laser Machine Type</div>
<div class="a" style="left:395.5px;top:216.1px;width:170px;height:11.3px;background:#1257a0;border-radius:1px;box-shadow:inset 0 -1px 0 #0a3f7c"></div>
<svg style="left:396px;top:216.3px" width="11" height="11"><circle cx="5.5" cy="5.5" r="5" fill="#fff"/><path d="M3 4.5L5.5 7L8 4.5" stroke="#222" stroke-width="1.3" fill="none"/></svg>
<div class="t" style="left:409px;top:218.8px;color:#fff">CCD Options</div>
<div class="a" style="left:395.5px;top:228.9px;width:170px;height:11.3px;background:#1257a0;border-radius:1px;box-shadow:inset 0 -1px 0 #0a3f7c"></div>
<svg style="left:396px;top:229.1px" width="11" height="11"><circle cx="5.5" cy="5.5" r="5" fill="#fff"/><path d="M3 4.5L5.5 7L8 4.5" stroke="#222" stroke-width="1.3" fill="none"/></svg>
<div class="t" style="left:409px;top:231.6px;color:#fff">Label creator</div>
<div class="a" style="left:395.5px;top:241.7px;width:170px;height:11.3px;background:#1257a0;border-radius:1px;box-shadow:inset 0 -1px 0 #0a3f7c"></div>
<svg style="left:396px;top:241.9px" width="11" height="11"><circle cx="5.5" cy="5.5" r="5" fill="#fff"/><path d="M3 4.5L5.5 7L8 4.5" stroke="#222" stroke-width="1.3" fill="none"/></svg>
<div class="t" style="left:409px;top:244.4px;color:#fff">Smart Copy</div>
<div class="a" style="left:395.5px;top:254.5px;width:170px;height:11.3px;background:#1257a0;border-radius:1px;box-shadow:inset 0 -1px 0 #0a3f7c"></div>
<svg style="left:396px;top:254.7px" width="11" height="11"><circle cx="5.5" cy="5.5" r="5" fill="#fff"/><path d="M3 4.5L5.5 7L8 4.5" stroke="#222" stroke-width="1.3" fill="none"/></svg>
<div class="t" style="left:409px;top:257.2px;color:#fff">Read Excel Data</div>
<div class="a" style="left:395.5px;top:267.3px;width:170px;height:11.3px;background:#1257a0;border-radius:1px;box-shadow:inset 0 -1px 0 #0a3f7c"></div>
<svg style="left:396px;top:267.5px" width="11" height="11"><circle cx="5.5" cy="5.5" r="5" fill="#fff"/><path d="M3 4.5L5.5 7L8 4.5" stroke="#222" stroke-width="1.3" fill="none"/></svg>
<div class="t" style="left:409px;top:270.0px;color:#fff">Optimize Vector</div>
<div class="a" style="left:395.5px;top:280.1px;width:170px;height:11.3px;background:#1257a0;border-radius:1px;box-shadow:inset 0 -1px 0 #0a3f7c"></div>
<svg style="left:396px;top:280.3px" width="11" height="11"><circle cx="5.5" cy="5.5" r="5" fill="#fff"/><path d="M3 6.5L5.5 4L8 6.5" stroke="#222" stroke-width="1.3" fill="none"/></svg>
<div class="t" style="left:409px;top:282.8px;color:#fff">Sort Vector / Cleanup</div>
<div class="a" style="left:395.5px;top:334.0px;width:170px;height:11.3px;background:#1257a0;border-radius:1px;box-shadow:inset 0 -1px 0 #0a3f7c"></div>
<svg style="left:396px;top:334.2px" width="11" height="11"><circle cx="5.5" cy="5.5" r="5" fill="#fff"/><path d="M3 4.5L5.5 7L8 4.5" stroke="#222" stroke-width="1.3" fill="none"/></svg>
<div class="t" style="left:409px;top:336.7px;color:#fff">Create laser image</div>
<div class="a" style="left:395.5px;top:346.8px;width:170px;height:11.3px;background:#1257a0;border-radius:1px;box-shadow:inset 0 -1px 0 #0a3f7c"></div>
<svg style="left:396px;top:347.0px" width="11" height="11"><circle cx="5.5" cy="5.5" r="5" fill="#fff"/><path d="M3 4.5L5.5 7L8 4.5" stroke="#222" stroke-width="1.3" fill="none"/></svg>
<div class="t" style="left:409px;top:349.5px;color:#fff">3D Effects</div>
<div class="a" style="left:395.5px;top:359.6px;width:170px;height:11.3px;background:#1257a0;border-radius:1px;box-shadow:inset 0 -1px 0 #0a3f7c"></div>
<svg style="left:396px;top:359.8px" width="11" height="11"><circle cx="5.5" cy="5.5" r="5" fill="#fff"/><path d="M3 4.5L5.5 7L8 4.5" stroke="#222" stroke-width="1.3" fill="none"/></svg>
<div class="t" style="left:409px;top:362.3px;color:#fff">Stamp Tools</div>
<div class="a" style="left:395.5px;top:372.4px;width:170px;height:11.3px;background:#1257a0;border-radius:1px;box-shadow:inset 0 -1px 0 #0a3f7c"></div>
<svg style="left:396px;top:372.6px" width="11" height="11"><circle cx="5.5" cy="5.5" r="5" fill="#fff"/><path d="M3 6.5L5.5 4L8 6.5" stroke="#222" stroke-width="1.3" fill="none"/></svg>
<div class="t" style="left:409px;top:375.1px;color:#fff">Rhinestone</div>

<div class="a" style="left:395.5px;top:291px;width:170px;height:40.5px;background:#2c90a1;border:1px solid #1f6c7c;border-top:none"></div>
<div class="t" style="left:402px;top:301.5px;color:#10222a">Sort Type</div>
<div class="a" style="left:402px;top:314px;width:86px;height:12px;background:#efefef;border:1px solid #c8c8c8"></div>
<div class="t" style="left:405px;top:316.5px;color:#222">Smart</div>
<svg style="left:480px;top:318px" width="5" height="3"><path d="M0 0H5L2.5 3Z" fill="#222"/></svg>
<div class="a" style="left:493px;top:314px;width:66px;height:12px;background:#e6e6e6;border:1px solid #c0c0c0"></div>
<div class="t" style="left:517px;top:316.5px;color:#222">Apply</div>
<div class="a" style="left:395.5px;top:383.7px;width:170px;height:29.3px;background:#2c90a1;border-left:1px solid #1f6c7c;border-right:1px solid #1f6c7c"></div>
<div class="t" style="left:402px;top:393.5px;color:#10222a">Fill Color</div>
<div class="a" style="left:492px;top:391px;width:67px;height:11px;background:#f8f8f8;border:1px solid #c8c8c8"></div>
<div class="t" style="left:495px;top:393px;color:#222">008DD2</div>
<div class="a" style="left:492px;top:406px;width:67px;height:7px;background:#f8f8f8;border:1px solid #c8c8c8;border-bottom:none"></div>
<div class="a" style="left:395.5px;top:408px;width:96px;height:5px;overflow:hidden"><div class="t" style="left:6px;top:1.5px;color:#1f3540">Circle Width (mm)</div></div>
<div class="t" style="left:495px;top:408px;color:#222;height:5px;overflow:hidden">5</div>
<div class="a" style="left:566px;top:213px;width:9px;height:104px;background:#cdcdcd"></div>
<svg style="left:567px;top:205px" width="7" height="5"><path d="M0.5 4L3.5 1L6.5 4" stroke="#888" fill="none"/></svg>
<svg style="left:567px;top:406px" width="7" height="5"><path d="M0.5 1L3.5 4L6.5 1" stroke="#888" fill="none"/></svg>
<div class="a" style="left:395px;top:413px;width:181px;height:20px;background:#f0f0f0"></div>
<div class="a" style="left:513px;top:417px;width:60px;height:12px;background:#e9e9e9;border:1px solid #d2d2d2"></div>
<div class="t" style="left:515px;top:419.5px;font-size:7.2px;color:#333">Undo (Ctrl+Z)</div>
<svg style="left:560px;top:418px" width="10" height="10"><path d="M2.5 3.5H6A2.5 2.5 0 0 1 6 8.5H3" stroke="#333" fill="none" stroke-width="1"/><path d="M4 1.5L1.5 3.5L4 5.5" stroke="#333" fill="none" stroke-width="1"/></svg>


<!-- OBJECTS PANEL -->
<div class="a" style="left:590px;top:74px;width:2px;height:374px;background:#262626"></div>
<div class="a" style="left:592px;top:74px;width:196px;height:14px;background:#2f2f2f"></div>
<div class="t" style="left:596px;top:78px;font-size:6.8px;color:#ddd">Objects</div>
<svg style="left:764px;top:79px" width="6" height="6"><path d="M0 0L2.7 3L0 6ZM3 0L5.7 3L3 6Z" fill="#999"/></svg>
<svg style="left:776px;top:78px" width="8" height="8"><path d="M0.5 0.5L7.5 7.5M7.5 0.5L0.5 7.5" stroke="#aaa" stroke-width="0.9"/></svg>
<div class="a" style="left:592px;top:88px;width:182px;height:360px;background:#2e2e2e"></div>
<div class="a" style="left:593px;top:92px;width:181px;height:15px;background:#262626;border:1px solid #3a3a3a"></div>
<div class="t" style="left:596px;top:96px;color:#555">Search</div>
<div class="a" style="left:592px;top:107px;width:182px;height:18px;background:#383838"></div>
<div class="a" style="left:593px;top:109px;width:14px;height:14px;background:#262626;border:1px solid #3a3a3a"></div>
<svg style="left:595px;top:111px" width="11" height="11"><path d="M1.5 1.5H6L8 3.5V6M1.5 1.5V9.5H4" class="ic" stroke="#ccc"/><path d="M6.5 5.5L10 7.5L6.5 9.5L3 7.5Z" fill="#ddd"/></svg>
<svg style="left:611px;top:110px" width="12" height="12"><path d="M6 0.5L11.5 3.5L6 6.5L0.5 3.5Z" fill="none" stroke="#eee" stroke-width="1"/><path d="M0.5 6L6 9L11.5 6L11.5 7.5L6 10.5L0.5 7.5Z" fill="#eee"/></svg>
<div class="t" style="left:626px;top:113px;font-weight:bold;color:#eee">Page 1</div>
<div class="t" style="left:657px;top:113px;color:#bbb">Layer 1</div>
<svg style="left:762px;top:111px" width="12" height="12"><circle cx="5.5" cy="5.5" r="3" fill="none" stroke="#eee" stroke-width="1.8"/><path d="M5.5 0.5V2.5M5.5 8.5V10.5M0.5 5.5H2.5M8.5 5.5H10.5M2 2L3.3 3.3M7.7 7.7L9 9M9 2L7.7 3.3M3.3 7.7L2 9" stroke="#eee" stroke-width="1.6"/><path d="M10 11H11.5V9.5" stroke="#aaa" stroke-width="0.8" fill="none"/></svg>
<div class="a" style="left:592px;top:125px;width:182px;height:1px;background:#252525"></div>
<div class="a" style="left:592px;top:126px;width:182px;height:16px;background:#383838;border-bottom:1.5px solid #202020"></div>
<svg style="left:597px;top:131px" width="6" height="5"><path d="M0 0H6L3 5Z" fill="#eee"/></svg>
<div class="t" style="left:613px;top:130.7px;font-weight:bold;color:#eee">Page 1</div>
<div class="a" style="left:592px;top:142px;width:182px;height:16px;background:#313131;border-bottom:1.5px solid #202020"></div>
<svg style="left:607px;top:145px" width="10" height="10"><path d="M2.5 0V10M0 2.5H9" stroke="#bbb" stroke-width="1"/></svg>
<div class="t" style="left:631px;top:146.7px;color:#dcdcdc">Guides</div>
<svg style="left:755px;top:145px" width="8" height="9"><path d="M2 4V2.5A1.8 1.8 0 0 1 5.5 2.5" class="ic" stroke="#ccc"/><path d="M0.5 4.5H7.5V8.5H0.5Z" fill="none" stroke="#ccc"/><path d="M1 6.5H7" stroke="#ccc"/></svg>
<div class="a" style="left:768px;top:143px;width:3px;height:13px;background:#0a0aff;border-radius:1px"></div>
<div class="a" style="left:592px;top:158px;width:182px;height:16px;background:#313131;border-bottom:1.5px solid #202020"></div>
<svg style="left:607px;top:161px" width="10" height="10"><path d="M5 0.5L9.5 3L5 5.5L0.5 3Z" fill="none" stroke="#eee"/><path d="M0.5 5L5 7.5L9.5 5V6.5L5 9.5L0.5 6.5Z" fill="#eee"/></svg>
<div class="t" style="left:631px;top:162.7px;color:#dcdcdc">Layer 2</div>
<div class="a" style="left:768px;top:159px;width:3px;height:13px;background:#2a1a18"></div>
<div class="a" style="left:592px;top:174px;width:182px;height:16px;background:#313131;border-bottom:1.5px solid #202020"></div>
<svg style="left:597px;top:179px" width="6" height="5"><path d="M0 0H6L3 5Z" fill="#eee"/></svg>
<svg style="left:607px;top:177px" width="10" height="10"><path d="M5 0.5L9.5 3L5 5.5L0.5 3Z" fill="none" stroke="#eee"/><path d="M0.5 5L5 7.5L9.5 5V6.5L5 9.5L0.5 6.5Z" fill="#eee"/></svg>
<div class="t" style="left:631px;top:178.7px;font-weight:bold;color:#eee">Layer 1</div>
<div class="a" style="left:768px;top:175px;width:3px;height:13px;background:#2a1a18"></div>
<div class="a" style="left:592px;top:190px;width:182px;height:16px;background:#063b7e"></div>
<div class="a" style="left:611px;top:192px;width:13px;height:13px;border:1px solid #2d5a92"></div>
<div class="t" style="left:636px;top:195.7px;color:#e2e2e2">1</div>
<svg style="left:752px;top:195px" width="8" height="6"><path d="M0.5 3C2 0.5 6 0.5 7.5 3C6 5.5 2 5.5 0.5 3Z" fill="#ddd"/><circle cx="4" cy="3" r="1.2" fill="#063b7e"/></svg>
<svg style="left:762px;top:193px" width="7" height="9"><path d="M1.5 4V2.5A1.8 1.8 0 0 1 5 2" fill="none" stroke="#bbb"/><rect x="0.5" y="4.5" width="6" height="4" fill="none" stroke="#bbb"/></svg>
<svg style="left:667.5px;top:198px" width="9" height="13"><path d="M0.5 0.5V10.5L3 8.3L5 12L6.8 11.2L5 7.6H8.5Z" fill="#fff" stroke="#000" stroke-width="0.7"/></svg>
<div class="a" style="left:611px;top:208.0px;width:13px;height:13px;border:1px solid #444"></div>
<div class="t" style="left:636px;top:211.7px;color:#dcdcdc">2</div>
<div class="a" style="left:611px;top:224.2px;width:13px;height:13px;border:1px solid #444"></div>
<div class="t" style="left:636px;top:227.9px;color:#dcdcdc">3</div>
<div class="a" style="left:611px;top:240.4px;width:13px;height:13px;border:1px solid #444"></div>
<div class="t" style="left:636px;top:244.1px;color:#dcdcdc">4</div>
<div class="a" style="left:611px;top:256.6px;width:13px;height:13px;border:1px solid #444"></div>
<div class="t" style="left:636px;top:260.3px;color:#dcdcdc">5</div>
<div class="a" style="left:611px;top:272.8px;width:13px;height:13px;border:1px solid #444"></div>
<div class="t" style="left:636px;top:276.5px;color:#dcdcdc">6</div>
<div class="a" style="left:611px;top:289.0px;width:13px;height:13px;border:1px solid #444"></div>
<div class="t" style="left:636px;top:292.7px;color:#dcdcdc">7</div>
<div class="a" style="left:611px;top:305.2px;width:13px;height:13px;border:1px solid #444"></div>
<div class="t" style="left:636px;top:308.9px;color:#dcdcdc">8</div>
<div class="a" style="left:592px;top:320px;width:182px;height:16px;background:#383838;border-bottom:1.5px solid #202020"></div>
<svg style="left:597px;top:326px" width="6" height="5"><path d="M0 0H6L3 5Z" fill="#eee"/></svg>
<div class="t" style="left:613px;top:325.7px;color:#e2e2e2">Master Page</div>
<div class="a" style="left:592px;top:336px;width:182px;height:17px;background:#313131;border-bottom:1.5px solid #202020"></div>
<svg style="left:607px;top:340px" width="10" height="10"><path d="M2.5 0V10M0 2.5H9" stroke="#bbb" stroke-width="1"/></svg>
<div class="t" style="left:631px;top:341.7px;color:#dcdcdc">Guides (all pages)</div>
<svg style="left:755px;top:341px" width="8" height="9"><path d="M2 4V2.5A1.8 1.8 0 0 1 5.5 2.5" class="ic" stroke="#ccc"/><path d="M0.5 4.5H7.5V8.5H0.5Z" fill="none" stroke="#ccc"/><path d="M1 6.5H7" stroke="#ccc"/></svg>
<div class="a" style="left:768px;top:339px;width:3px;height:12px;background:#0a0aff;border-radius:1px"></div>
<div class="a" style="left:592px;top:353px;width:182px;height:16px;background:#313131;border-bottom:1.5px solid #202020"></div>
<svg style="left:607px;top:356px" width="10" height="10"><rect x="2" y="2" width="6" height="6" fill="#ccc"/><path d="M0.5 0.5L2.5 2.5M9.5 0.5L7.5 2.5M0.5 9.5L2.5 7.5M9.5 9.5L7.5 7.5" stroke="#ccc"/></svg>
<div class="t" style="left:631px;top:357.7px;color:#dcdcdc">Desktop</div>
<svg style="left:755px;top:357px" width="8" height="9"><path d="M2 4V2.5A1.8 1.8 0 0 1 5.5 2.5" class="ic" stroke="#ccc"/><path d="M0.5 4.5H7.5V8.5H0.5Z" fill="none" stroke="#ccc"/><path d="M1 6.5H7" stroke="#ccc"/></svg>
<div class="a" style="left:768px;top:355px;width:3px;height:12px;background:#2a1a18"></div>
<svg style="left:607px;top:372px" width="10" height="10"><path d="M3 0.5V9.5M7 0.5V9.5M0.5 3H9.5M0.5 7H9.5" stroke="#ccc"/></svg>
<div class="t" style="left:631px;top:373.7px;color:#dcdcdc">Document Grid</div>
<svg style="left:744px;top:374px" width="8" height="6"><path d="M0.5 3C2 0.5 6 0.5 7.5 3C6 5.5 2 5.5 0.5 3Z" fill="none" stroke="#aaa"/><path d="M1 0.5L7 5.5" stroke="#aaa"/></svg>
<svg style="left:752px;top:373px" width="6" height="8"><rect x="0.5" y="3.5" width="5" height="4" fill="#555"/><path d="M1.5 3.5V2A1.5 1.5 0 0 1 4.5 2V3.5" stroke="#555" fill="none"/></svg>
<svg style="left:759px;top:373px" width="8" height="9"><path d="M2 4V2.5A1.8 1.8 0 0 1 5.5 2.5" fill="none" stroke="#555"/><path d="M0.5 4.5H7.5V8.5H0.5Z" fill="none" stroke="#555"/></svg>
<div class="a" style="left:768px;top:371px;width:3px;height:12px;background:#eee;border-radius:1.5px"></div>

<div class="a" style="left:592px;top:433px;width:182px;height:15px;background:#363636"></div>
<svg style="left:596px;top:434px" width="11" height="12"><path d="M0.5 8L5 5.5L9.5 8L5 10.5Z" fill="#ddd"/><path d="M0.5 6L5 3.5" stroke="#ddd" fill="none"/><rect x="6" y="0.5" width="4.5" height="4.5" fill="#3cd44a" stroke="#1a6e22" stroke-width="0.5"/></svg>
<svg style="left:611px;top:434px" width="12" height="12"><path d="M0.5 4L5 2L9 4L5 6.5Z M0.5 6.5L5 9L9 6.5 M0.5 9L5 11.5L9 9" fill="none" stroke="#ddd" stroke-width="0.9"/><rect x="6" y="0.5" width="4.5" height="4.5" fill="#3cd44a" stroke="#1a6e22" stroke-width="0.5"/><path d="M10 11H11.5V9.5" stroke="#aaa" fill="none" stroke-width="0.7"/></svg>
<svg style="left:627px;top:434px" width="11" height="12"><path d="M1 11L4 7M3 10C5 7 6 5 5 4" fill="none" stroke="#ddd"/><text x="2" y="10" font-size="6" fill="#ddd" font-style="italic">fx</text><rect x="6" y="0.5" width="4.5" height="4.5" fill="#3cd44a" stroke="#1a6e22" stroke-width="0.5"/></svg>
<svg style="left:645px;top:435px" width="9" height="11"><path d="M0.5 1.5H8.5M3 1.5V0.5H6V1.5M1.5 2.5L2 10.5H7L7.5 2.5Z" fill="none" stroke="#ddd"/><path d="M3.5 4V9M5.5 4V9" stroke="#ddd" stroke-width="0.6"/></svg>
<div class="a" style="left:699px;top:440px;width:72px;height:2px;background:#222"></div>
<div class="a" style="left:699px;top:436px;width:1px;height:9px;background:#222"></div>
<div class="a" style="left:770px;top:436px;width:1px;height:9px;background:#222"></div>
<div class="a" style="left:734px;top:436px;width:1px;height:9px;background:#222"></div>
<div class="a" style="left:720px;top:434px;width:3px;height:13px;background:#222;border:1px solid #444;border-radius:1px"></div>
<div class="a" style="left:774px;top:88px;width:1px;height:360px;background:#3d5670"></div>
<!-- SIDE TABS -->
<div class="a" style="left:775px;top:88px;width:13px;height:360px;background:#2b2b2b"></div>
<div class="a" style="left:775px;top:89px;width:12px;height:57px;background:#4b4b4b"></div>
<svg style="left:776px;top:90px" width="11" height="11"><path d="M2 1.5L5.5 5L3 7.5L0.5 5Z" fill="#eee"/><circle cx="3" cy="4" r="1" fill="#d2451e"/><rect x="6" y="6" width="4.5" height="4" fill="#999"/></svg>
<div class="t" style="left:756px;top:115px;width:50px;font-size:6.4px;color:#ccc;transform:rotate(90deg);transform-origin:50% 50%;text-align:center">Properties</div>
<div class="a" style="left:775px;top:149px;width:12px;height:52px;background:#1c6fd0"></div>
<svg style="left:776px;top:151px" width="10" height="10"><path d="M5 0.5L9.5 3L5 5.5L0.5 3Z" fill="none" stroke="#fff"/><path d="M0.5 5L5 7.5L9.5 5V6.5L5 9.5L0.5 6.5Z" fill="#fff"/></svg>
<div class="t" style="left:761px;top:176px;width:40px;font-size:6.4px;color:#fff;transform:rotate(90deg);transform-origin:50% 50%;text-align:center">Objects</div>
<div class="a" style="left:775px;top:203px;width:12px;height:86px;background:#464646"></div>
<svg style="left:776px;top:205px" width="10" height="8"><path d="M1 0.5V7.5M3 1.5H6V6.5H3ZM7 2.5H9V5.5H7Z" fill="none" stroke="#ccc" stroke-width="0.8"/></svg>
<div class="t" style="left:746px;top:243px;width:70px;font-size:6.4px;color:#ccc;transform:rotate(90deg);transform-origin:50% 50%;text-align:center">Align and Distribute</div>
<div class="a" style="left:775px;top:291px;width:12px;height:52px;background:#464646"></div>
<svg style="left:776px;top:293px" width="10" height="10"><rect x="0.5" y="0.5" width="9" height="9" fill="#888"/><rect x="3" y="3" width="4" height="4" fill="#333"/></svg>
<div class="t" style="left:761px;top:319px;width:40px;font-size:6.4px;color:#ccc;transform:rotate(90deg);transform-origin:50% 50%;text-align:center">Contour</div>
<svg style="left:777px;top:347px" width="7" height="7"><path d="M3.5 0V7M0 3.5H7" stroke="#888" stroke-width="0.9"/></svg>
<!-- PALETTE -->
<div class="a" style="left:788px;top:74px;width:12px;height:374px;background:#333"></div>
<svg style="left:789px;top:75px" width="10" height="5"><rect width="10" height="5" fill="url(#grip)"/></svg>
<svg style="left:791px;top:82px" width="5" height="7"><path d="M0.5 0L4.5 3.5L0.5 7Z" fill="#ddd"/></svg>
<svg style="left:790px;top:93px" width="8" height="8"><path d="M1 7L7 1" stroke="#555" stroke-width="1.3"/></svg>
<svg style="left:790px;top:106px" width="8" height="5"><path d="M0.5 4.5L4 1L7.5 4.5" stroke="#555" fill="none"/></svg>
<div class="a" style="left:789px;top:114.60px;width:10.5px;height:10.50px;background:#ffffff"></div>
<div class="a" style="left:789px;top:125.02px;width:10.5px;height:10.50px;background:#2a1b17"></div>
<div class="a" style="left:789px;top:135.44px;width:10.5px;height:10.50px;background:#3f3f3f"></div>
<div class="a" style="left:789px;top:145.86px;width:10.5px;height:10.50px;background:#666666"></div>
<div class="a" style="left:789px;top:156.28px;width:10.5px;height:10.50px;background:#7f7f7f"></div>
<div class="a" style="left:789px;top:166.70px;width:10.5px;height:10.50px;background:#999999"></div>
<div class="a" style="left:789px;top:177.12px;width:10.5px;height:10.50px;background:#b2b2b2"></div>
<div class="a" style="left:789px;top:187.54px;width:10.5px;height:10.50px;background:#c6c6c6"></div>
<div class="a" style="left:789px;top:197.96px;width:10.5px;height:10.50px;background:#d9d9d9"></div>
<div class="a" style="left:789px;top:208.38px;width:10.5px;height:10.50px;background:#e9e9e9"></div>
<div class="a" style="left:789px;top:218.80px;width:10.5px;height:10.50px;background:#f2f2f2"></div>
<div class="a" style="left:789px;top:229.22px;width:10.5px;height:10.50px;background:#ffffff"></div>
<div class="a" style="left:789px;top:239.64px;width:10.5px;height:10.50px;background:#27288c"></div>
<div class="a" style="left:789px;top:250.06px;width:10.5px;height:10.50px;background:#00a0e9"></div>
<div class="a" style="left:789px;top:260.48px;width:10.5px;height:10.50px;background:#009944"></div>
<div class="a" style="left:789px;top:270.90px;width:10.5px;height:10.50px;background:#fff100"></div>
<div class="a" style="left:789px;top:281.32px;width:10.5px;height:10.50px;background:#e60012"></div>
<div class="a" style="left:789px;top:291.74px;width:10.5px;height:10.50px;background:#e4007f"></div>
<div class="a" style="left:789px;top:302.16px;width:10.5px;height:10.50px;background:#b34b9a"></div>
<div class="a" style="left:789px;top:312.58px;width:10.5px;height:10.50px;background:#f39800"></div>
<div class="a" style="left:789px;top:323.00px;width:10.5px;height:10.50px;background:#f5b2b2"></div>
<div class="a" style="left:789px;top:333.42px;width:10.5px;height:10.50px;background:#9d8777"></div>
<div class="a" style="left:789px;top:343.84px;width:10.5px;height:10.50px;background:#dcd6ee"></div>
<div class="a" style="left:789px;top:354.26px;width:10.5px;height:10.50px;background:#b4a7d6"></div>
<div class="a" style="left:789px;top:364.68px;width:10.5px;height:10.50px;background:#7f9fd8"></div>
<div class="a" style="left:789px;top:375.10px;width:10.5px;height:10.50px;background:#7c6cbd"></div>
<div class="a" style="left:789px;top:385.52px;width:10.5px;height:10.50px;background:#9d90c6"></div>
<div class="a" style="left:789px;top:395.94px;width:10.5px;height:10.50px;background:#5a70a9"></div>
<div class="a" style="left:789px;top:406.36px;width:10.5px;height:10.50px;background:#584c77"></div>
<div class="a" style="left:789px;top:416.78px;width:10.5px;height:6.42px;background:#8ca4cf"></div>
<svg style="left:789px;top:114.6px" width="10.5" height="10.4"><path d="M1.5 9L9 1.5" stroke="#e05060" stroke-width="0.8"/></svg>

<svg style="left:790px;top:426px" width="8" height="5"><path d="M0.5 0.5L4 4L7.5 0.5" stroke="#888" fill="none"/></svg>
<svg style="left:790px;top:436px" width="8" height="6"><path d="M0.5 0.5L3 3L0.5 5.5M4 0.5L6.5 3L4 5.5" stroke="#666" fill="none"/></svg>

<!-- STATUS BAR -->
<div class="a" style="left:0;top:449px;width:800px;height:21px;background:#373737"></div>
<svg style="left:5px;top:453px" width="14" height="14"><circle cx="6" cy="6" r="3.2" fill="none" stroke="#eee" stroke-width="1.8"/><path d="M6 0.5V2.5M6 9.5V11.5M0.5 6H2.5M9.5 6H11.5M2.1 2.1L3.5 3.5M8.5 8.5L9.9 9.9M9.9 2.1L8.5 3.5M3.5 8.5L2.1 9.9" stroke="#eee" stroke-width="1.7"/><path d="M11.5 13H13V11.5" stroke="#aaa" stroke-width="0.8" fill="none"/></svg>
<div class="t" style="left:20px;top:455.5px;font-size:7px;color:#c8c8c8;transform:scaleX(0.936);transform-origin:0 0">Click an object twice for rotating/skewing; dbl-clicking tool selects all objects; Shift+click multi-selects; Alt+click digs; Ctrl+click selects in a group</div>
<div class="t" style="left:453px;top:455.5px;color:#c8c8c8">1 on Layer 1</div>
<svg style="left:502px;top:453px" width="11" height="13"><path d="M5 1L9.5 5.5L5 10L0.5 5.5Z" fill="none" stroke="#eee" stroke-width="1.2"/><path d="M2 7L5 10L8 7Z" fill="#e33"/></svg>
<div class="a" style="left:513px;top:452px;width:13px;height:14px;background:#fff;border:1px solid #999"></div>
<svg style="left:513px;top:452px" width="13" height="14"><path d="M1 13L12 1" stroke="#d22" stroke-width="1.3"/></svg>
<div class="t" style="left:529px;top:455.5px;color:#c8c8c8">None</div>
<svg style="left:629px;top:452px" width="7" height="14"><path d="M3.5 0.5L5.8 5V9H1.2V5Z" fill="none" stroke="#ccc" stroke-width="0.9"/><path d="M3.5 3V6.5" stroke="#ccc" stroke-width="0.7"/><circle cx="3.5" cy="11.5" r="1.6" fill="none" stroke="#ccc" stroke-width="0.9"/></svg>
<div class="a" style="left:639px;top:453px;width:12px;height:13px;background:#2a1a16;border:1px solid #3a3a3a"></div>
<div class="t" style="left:653px;top:455.5px;color:#c8c8c8">C:0 M:0 Y:0 K:100&nbsp; Hairline</div>
<div class="a" style="left:745px;top:445px;width:46px;height:17px;background:rgba(40,40,40,0.6)"></div>
<div class="a" style="left:752.5px;top:447px;width:1.5px;height:8px;background:#8a8a8a"></div>
<div class="a" style="left:756.5px;top:447px;width:1.5px;height:8px;background:#8a8a8a"></div>
<svg style="left:773px;top:445px" width="10" height="10"><circle cx="4.5" cy="4.5" r="3" fill="none" stroke="#999"/><path d="M1 9H8M3 7L6 2M7 0L9 2" stroke="#999" stroke-width="0.8" fill="none"/></svg>
<div class="a" style="left:780px;top:455px;width:1px;height:13px;background:#222"></div>
<svg style="left:785px;top:454px" width="12" height="12"><rect x="0.5" y="0.5" width="11" height="8" fill="#1fa0e0" stroke="#aaa"/><rect x="1" y="1" width="10" height="4" fill="#e04040"/><circle cx="6" cy="5" r="1.5" fill="#eee"/><path d="M3 11H9" stroke="#aaa"/></svg>

</body></html>
